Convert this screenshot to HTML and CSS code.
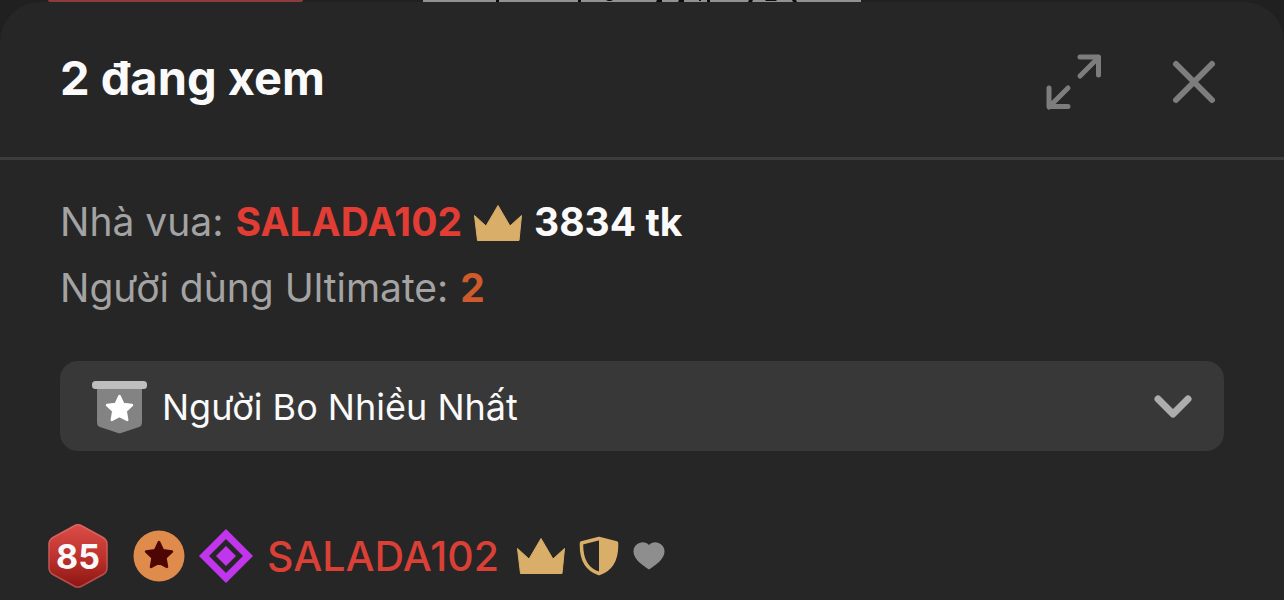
FILE: index.html
```html
<!DOCTYPE html>
<html lang="vi">
<head>
<meta charset="utf-8">
<meta name="viewport" content="width=device-width, initial-scale=1">
<title>2 đang xem</title>
<link rel="stylesheet" href="styles.css">
</head>
<body>
<svg class="defs" aria-hidden="true">
  <defs>
    <symbol id="crown" viewBox="0 0 48 36">
      <path d="M24 .5 36 21 47.500 10.500 45 35.500H3.500L.5 10.500 12 21Z" fill="#d9ae68" stroke="#d9ae68" stroke-width="1" stroke-linejoin="round"/>
    </symbol>
    <symbol id="star" viewBox="0 0 28 28">
      <path d="M14 2 17.600 9.600 26 10.700 19.900 16.500 21.400 25 14 21 6.600 25 8.100 16.500 2 10.700 10.400 9.600Z" fill="currentColor" stroke="currentColor" stroke-width="2.500" stroke-linejoin="round"/>
    </symbol>
    <linearGradient id="level-fill" x1="0" y1="0" x2="0" y2="1">
      <stop offset="0" stop-color="#da4c47"/>
      <stop offset=".5" stop-color="#bf332e"/>
      <stop offset="1" stop-color="#8c1512"/>
    </linearGradient>
    <linearGradient id="level-edge" x1="0" y1="0" x2="0" y2="1">
      <stop offset="0" stop-color="#e0655f"/>
      <stop offset="1" stop-color="#b04a46"/>
    </linearGradient>
  </defs>
</svg>
<div class="backdrop" aria-hidden="true">
  <span class="backdrop-tab"></span>
  <svg class="backdrop-bar" viewBox="0 0 438 2" preserveAspectRatio="none">
    <path d="M73 0h3v2h-3zM155 0h3v2h-3zM183 0h7l-2 1h-3zM234 0h5v2h-6zM256 0h5v2h-6zM276 0h2v1h-2zM284 0h3v2h-3zM326 0h4l-1 2h-4zM343 0h10l1 1h-12zM369 0h4l1 2h-4z" fill="#0c0c0c"/>
  </svg>
</div>
<main class="sheet">
  <header class="sheet-header">
    <h1 class="title">2 đang xem</h1>
    <button class="icon-button" type="button" aria-label="Mở rộng">
      <svg width="60" height="60" viewBox="0 0 60 60" class="stroke-icon stroke-thin">
        <path d="M36 24 54 6M36 5H54.500V23M24 36 5 55M5 36V54.500H24"/>
      </svg>
    </button>
    <button class="icon-button" type="button" aria-label="Đóng">
      <svg width="60" height="60" viewBox="0 0 60 60" class="stroke-icon stroke-thick">
        <path d="M12 12 48 48M48 12 12 48"/>
      </svg>
    </button>
  </header>
  <section class="summary">
    <p class="line"><span>Nhà vua:</span><strong class="king">SALADA102</strong><svg class="crown crown-low"><use href="#crown"/></svg><strong class="tokens">3834 tk</strong></p>
    <p class="line"><span>Người dùng Ultimate:</span><strong class="count">2</strong></p>
  </section>
  <label class="picker">
    <svg width="56" height="54" viewBox="0 0 56 54" aria-hidden="true">
      <path d="M5 6H50V42Q50 46 47 47L29 53Q27.500 53.500 26 53L8 47Q5 46 5 42Z" fill="#838383"/>
      <rect x="0" y="1" width="55" height="8" rx="3.500" fill="#bebebe"/>
      <svg x="13" y="14" width="29" height="29" class="white"><use href="#star"/></svg>
    </svg>
    <select class="picker-select" aria-label="Sắp xếp">
      <option>Người Bo Nhiều Nhất</option>
    </select>
    <svg class="chevron" width="38" height="24" viewBox="0 0 38 24" aria-hidden="true">
      <path d="M4 4 19 19 34 4"/>
    </svg>
  </label>
  <ul class="viewers">
    <li class="viewer">
      <span class="level">
        <svg width="60" height="66" viewBox="0 0 60 66" aria-hidden="true">
          <path d="M26 3Q30 .5 34 3L55 14.500Q59 17 59 21V45Q59 49 55 51.500L34 63Q30 65.500 26 63L5 51.500Q1 49 1 45V21Q1 17 5 14.500Z" fill="url(#level-fill)" stroke="url(#level-edge)" stroke-width="1.500"/>
        </svg>
        <span class="level-number">85</span>
      </span>
      <svg width="52" height="52" viewBox="0 0 52 52">
        <circle cx="26" cy="26" r="25.500" fill="#df8b4b"/>
        <svg x="11" y="10" width="30" height="30" class="maroon"><use href="#star"/></svg>
      </svg>
      <svg width="54" height="54" viewBox="0 0 54 54">
        <path fill-rule="evenodd" d="M27 0 54 27 27 54 0 27ZM27 10 10 27 27 44 44 27Z" fill="#c136ed"/>
        <path d="M27 17 37 27 27 37 17 27Z" fill="#c136ed"/>
      </svg>
      <a class="viewer-name" href="#">SALADA102</a>
      <svg class="crown"><use href="#crown"/></svg>
      <svg width="40" height="40" viewBox="0 0 40 40">
        <path d="M20 2.500 37.500 7C38 21 33.500 33 20 37.500 6.500 33 2 21 2.500 7Z" fill="none" stroke="#d9ae68" stroke-width="3.500" stroke-linejoin="round"/>
        <path d="M20 2 38 7C38 21 33 33 20 38Z" fill="#d9ae68"/>
      </svg>
      <svg width="32" height="28" viewBox="0 0 32 28">
        <path d="M16 27.500C9 23 .5 17 .5 9.500 .5 1 11-2.500 16 3 21-2.500 31.500 1 31.500 9.500 31.500 17 23 23 16 27.500Z" fill="#8e8e8e"/>
      </svg>
    </li>
  </ul>
</main>
</body>
</html>
```

FILE: styles.css
```css
* {
  box-sizing: border-box;
}

body {
  margin: 0;
  min-height: 100vh;
  display: flex;
  flex-direction: column;
  background: #202020;
  color: #fafafa;
  font-family: Inter, "Noto Sans", sans-serif;
  overflow: hidden;
}

svg {
  display: block;
  flex: none;
}

.defs {
  position: absolute;
  width: 0;
  height: 0;
}

.backdrop {
  display: flex;
  gap: 120px;
  height: 2px;
  padding-left: 48px;
}

.backdrop-tab {
  width: 255px;
  background: #8c3c3c;
  border-radius: 0 0 2px 2px;
}

.backdrop-bar {
  width: 438px;
  height: 2px;
  background: #929292;
}

.sheet {
  flex: 1;
  background: #262626;
  border-radius: 40px 40px 0 0;
}

.sheet-header {
  display: flex;
  align-items: center;
  gap: 60px;
  padding: 46px 60px 41px;
  border-bottom: 3px solid #3d3d3d;
}

.title {
  flex: 1;
  margin: 0;
  padding-bottom: 8px;
  font-size: 47px;
  line-height: 60px;
  font-weight: 700;
}

.icon-button {
  padding: 0;
  border: 0;
  background: none;
  cursor: pointer;
}

.stroke-icon {
  fill: none;
  stroke: #7d7d7d;
  stroke-linecap: round;
  stroke-linejoin: round;
}

.stroke-thin {
  stroke-width: 5;
}

.stroke-thick {
  stroke-width: 6;
}

.summary {
  padding: 29px 60px 0;
}

.line {
  display: flex;
  align-items: center;
  gap: 12px;
  margin: 0;
  font-size: 39px;
  line-height: 66px;
  color: #a3a3a3;
}

.king {
  color: #e23d34;
}

.tokens {
  color: #fafafa;
}

.count {
  color: #cf5a2c;
}

.crown {
  width: 48px;
  height: 36px;
}

.crown-low {
  margin-top: 2px;
}

.picker {
  display: flex;
  align-items: center;
  gap: 14px;
  height: 90px;
  margin: 40px 60px 0;
  padding: 2px 32px 0;
  background: #383838;
  border-radius: 18px;
}

.picker-select {
  flex: 1;
  min-width: 0;
  padding: 0;
  border: 0;
  appearance: none;
  background: transparent;
  color: #fafafa;
  font: 400 36px/60px Inter, "Noto Sans", sans-serif;
}

.chevron {
  fill: none;
  stroke: #adadad;
  stroke-width: 7;
  stroke-linecap: round;
  stroke-linejoin: round;
}

.white {
  color: #ffffff;
}

.maroon {
  color: #4e0604;
}

.viewers {
  margin: 0;
  padding: 72px 48px 0;
  list-style: none;
}

.viewer {
  display: flex;
  align-items: center;
  gap: 14px;
  height: 66px;
}

.level {
  display: grid;
  place-items: center;
  margin-right: 11px;
}

.level > * {
  grid-area: 1 / 1;
}

.level-number {
  padding-top: 2px;
  font-size: 34px;
  line-height: 40px;
  font-weight: 700;
}

.viewer-name {
  margin-right: 4px;
  color: #da4036;
  font-size: 41px;
  line-height: 60px;
  font-weight: 500;
  text-decoration: none;
}
```
